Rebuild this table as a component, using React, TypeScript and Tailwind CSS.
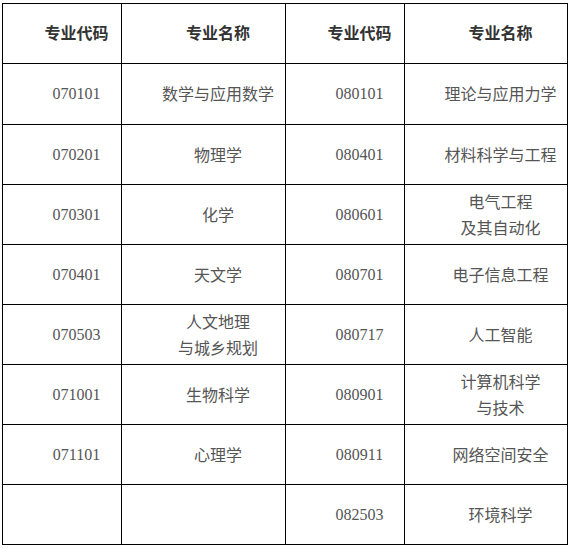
import React from "react";

type Row = { c1: string; n1: string[]; c2: string; n2: string[] };

const rows: Row[] = [
  { c1: "070101", n1: ["数学与应用数学"], c2: "080101", n2: ["理论与应用力学"] },
  { c1: "070201", n1: ["物理学"], c2: "080401", n2: ["材料科学与工程"] },
  { c1: "070301", n1: ["化学"], c2: "080601", n2: ["电气工程", "及其自动化"] },
  { c1: "070401", n1: ["天文学"], c2: "080701", n2: ["电子信息工程"] },
  { c1: "070503", n1: ["人文地理", "与城乡规划"], c2: "080717", n2: ["人工智能"] },
  { c1: "071001", n1: ["生物科学"], c2: "080901", n2: ["计算机科学", "与技术"] },
  { c1: "071101", n1: ["心理学"], c2: "080911", n2: ["网络空间安全"] },
  { c1: "", n1: [], c2: "082503", n2: ["环境科学"] },
];

function Head({ text }: { text: string }) {
  return (
    <div className="bg-white flex items-center justify-center pl-[29px] pb-[3px] text-[16px] font-bold text-[#333] [font-family:'Noto_Sans_CJK_SC',sans-serif]">
      {text}
    </div>
  );
}

function Code({ text }: { text: string }) {
  return (
    <div className="bg-white flex items-center justify-center pl-[29px] text-[16px] text-[#555] [font-family:'Liberation_Serif',serif]">
      {text}
    </div>
  );
}

function Name({ lines }: { lines: string[] }) {
  return (
    <div className="bg-white flex flex-col items-center justify-center pl-[29px] pb-[2px] text-[16px] leading-[26px] text-[#555] [font-family:'Noto_Sans_CJK_SC',sans-serif]">
      {lines.map((l) => (
        <span key={l}>{l}</span>
      ))}
    </div>
  );
}

export default function App() {
  return (
    <div className="w-[571px] h-[548px] bg-white pl-[2px] pt-[3px]">
      <div className="grid w-max gap-px bg-black p-px grid-cols-[118px_163px_118px_162px] grid-rows-[59px_60px_59px_59px_59px_59px_59px_59px_59px]">
        <Head text="专业代码" />
        <Head text="专业名称" />
        <Head text="专业代码" />
        <Head text="专业名称" />
        {rows.map((r, i) => (
          <React.Fragment key={i}>
            <Code text={r.c1} />
            <Name lines={r.n1} />
            <Code text={r.c2} />
            <Name lines={r.n2} />
          </React.Fragment>
        ))}
      </div>
    </div>
  );
}
